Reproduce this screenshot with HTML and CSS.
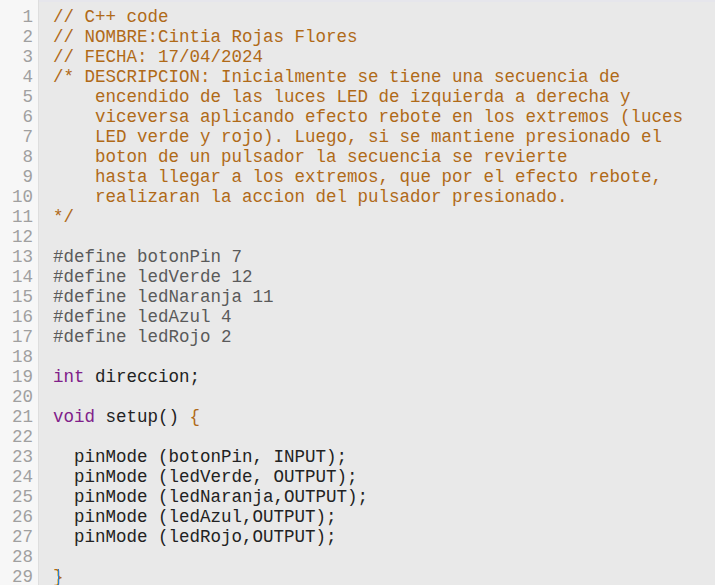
FILE: index.html
```html
<!DOCTYPE html>
<html>
<head>
<meta charset="utf-8">
<link rel="stylesheet" href="styles.css">
</head>
<body>
<div class="editor">
  <div class="gutter">
    <div>1</div><div>2</div><div>3</div><div>4</div><div>5</div><div>6</div><div>7</div><div>8</div><div>9</div><div>10</div>
    <div>11</div><div>12</div><div>13</div><div>14</div><div>15</div><div>16</div><div>17</div><div>18</div><div>19</div><div>20</div>
    <div>21</div><div>22</div><div>23</div><div>24</div><div>25</div><div>26</div><div>27</div><div>28</div><div>29</div>
  </div>
  <div class="code">
<div class="ln c">// C++ code</div>
<div class="ln c">// NOMBRE:Cintia Rojas Flores</div>
<div class="ln c">// FECHA: 17/04/2024</div>
<div class="ln c">/* DESCRIPCION: Inicialmente se tiene una secuencia de</div>
<div class="ln c">    encendido de las luces LED de izquierda a derecha y</div>
<div class="ln c">    viceversa aplicando efecto rebote en los extremos (luces</div>
<div class="ln c">    LED verde y rojo). Luego, si se mantiene presionado el</div>
<div class="ln c">    boton de un pulsador la secuencia se revierte</div>
<div class="ln c">    hasta llegar a los extremos, que por el efecto rebote,</div>
<div class="ln c">    realizaran la accion del pulsador presionado.</div>
<div class="ln c">*/</div>
<div class="ln"> </div>
<div class="ln m">#define botonPin 7</div>
<div class="ln m">#define ledVerde 12</div>
<div class="ln m">#define ledNaranja 11</div>
<div class="ln m">#define ledAzul 4</div>
<div class="ln m">#define ledRojo 2</div>
<div class="ln"> </div>
<div class="ln"><span class="k">int</span> direccion;</div>
<div class="ln"> </div>
<div class="ln"><span class="k">void</span> setup() <span class="b">{</span></div>
<div class="ln"> </div>
<div class="ln">  pinMode (botonPin, INPUT);</div>
<div class="ln">  pinMode (ledVerde, OUTPUT);</div>
<div class="ln">  pinMode (ledNaranja,OUTPUT);</div>
<div class="ln">  pinMode (ledAzul,OUTPUT);</div>
<div class="ln">  pinMode (ledRojo,OUTPUT);</div>
<div class="ln"> </div>
<div class="ln"><span class="b last">}<span class="cursor"></span></span></div>
  </div>
</div>
</body>
</html>
```
FILE: styles.css
```css
html, body {
  margin: 0;
  padding: 0;
  background: #e9e9e9;
  overflow: hidden;
}
.editor {
  display: flex;
  height: 585px;
  font-family: "Courier New", "Nimbus Mono PS", "Nimbus Mono L", "FreeMono", "Liberation Mono", monospace;
  font-size: 17.5px;
  line-height: 20px;
  border-top: 2px solid #e6e6ec;
  box-sizing: border-box;
}
.gutter {
  width: 39px;
  flex: none;
  background: #f7f7f7;
  border-right: 1px solid #dedede;
  color: #a0a0a0;
  text-align: right;
  padding: 7px 5px 0 0;
  box-sizing: border-box;
  margin-top: -2px;
}
.code {
  flex: 1;
  padding: 5px 0 0 14px;
  color: #222;
  border-top-left-radius: 4px;
}
.ln {
  white-space: pre;
  height: 20px;
}
.c { color: #b06a18; }
.m { color: #5a5a5a; }
.k { color: #80208a; }
.b { color: #b06a18; }
.last { position: relative; }
.cursor {
  position: absolute;
  left: 5px;
  top: 2px;
  width: 1px;
  height: 18px;
  background: #2a7fd0;
}
```
